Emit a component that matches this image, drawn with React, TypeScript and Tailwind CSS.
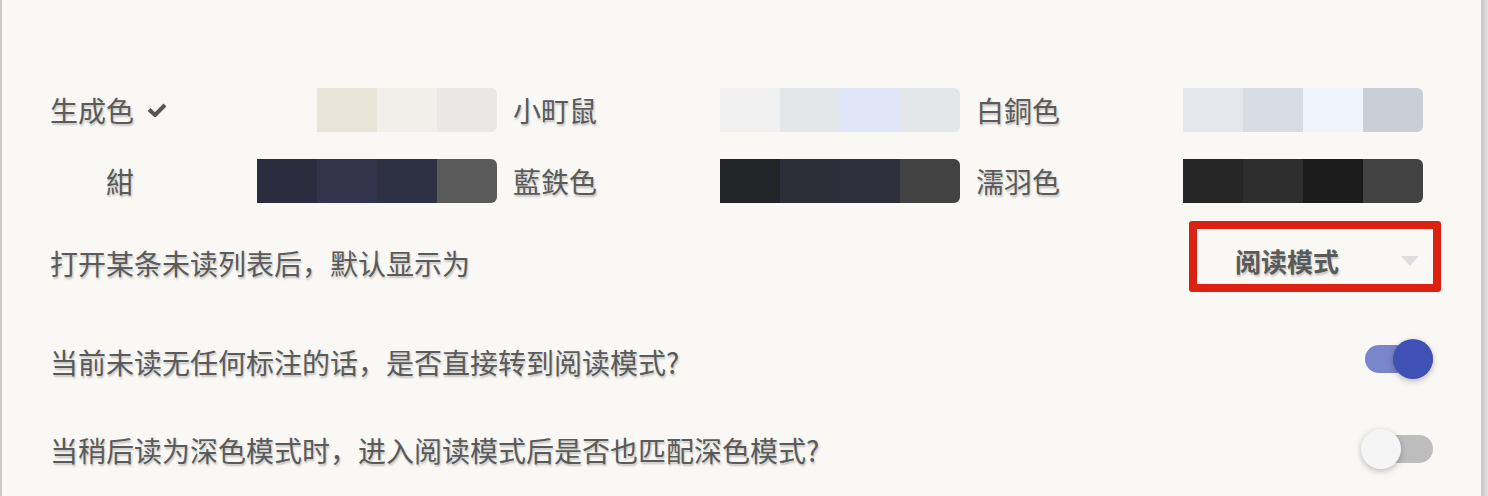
import React, { useState } from "react";

type Theme = {
  name: string;
  colors: string[];
  checked?: boolean;
};

const themes: Theme[] = [
  { name: "生成色", colors: ["#e9e4d8", "#f0efea", "#e9e8e4"], checked: true },
  { name: "小町鼠", colors: ["#f0f0f0", "#e4e7ea", "#dfe6f7", "#e4e7ea"] },
  { name: "白銅色", colors: ["#e4e7ec", "#d7dbe2", "#eff3fa", "#cacfd7"] },
  { name: "紺", colors: ["#2b2c3e", "#33344b", "#2e3144", "#5a5a5a"] },
  { name: "藍鉄色", colors: ["#232428", "#2d2f38", "#2d2f3a", "#424242"] },
  { name: "濡羽色", colors: ["#262626", "#2e2e2e", "#1b1b1b", "#424242"] },
];

const font = "font-['Noto_Sans_CJK_SC','Noto_Sans',sans-serif]";
const shadowText = "text-[#5a5a5a] [text-shadow:1px_2px_2px_rgba(0,0,0,0.22)]";

const ThemeItem = (props: Theme) => {
  return (
    <div className="flex items-center justify-between h-[44px]">
      <div className={`relative w-[84px] text-right text-[28px] leading-[44px] ${shadowText}`}>
        {props.name}
        {props.checked && (
          <svg
            className="absolute left-[97px] top-[14px]"
            width="20"
            height="16"
            viewBox="0 0 20 16"
          >
            <polyline
              points="2,7.5 8,13 18,3"
              fill="none"
              stroke="#555"
              strokeWidth="4"
              strokeLinejoin="round"
            />
          </svg>
        )}
      </div>
      <div className="flex overflow-hidden rounded-r-[6px]">
        {props.colors.map((c, i) => (
          <div key={i} className="w-[60px] h-[44px]" style={{ backgroundColor: c }} />
        ))}
      </div>
    </div>
  );
};

const Toggle = ({ on, onClick }: { on: boolean; onClick: () => void }) => {
  return (
    <button onClick={onClick} className="relative w-[72px] h-[40px] shrink-0 cursor-pointer">
      <span
        className={`absolute left-[4px] right-0 top-[6px] h-[28px] rounded-full ${
          on ? "bg-[#7986cb]" : "bg-[#bdbdbd]"
        }`}
      />
      <span
        className={`absolute top-0 w-[40px] h-[40px] rounded-full shadow-[0_2px_6px_rgba(0,0,0,0.25)] ${
          on ? "right-0 bg-[#3f51b5]" : "left-0 bg-[#f5f5f5]"
        }`}
      />
    </button>
  );
};

export default function App() {
  const [direct, setDirect] = useState(true);
  const [dark, setDark] = useState(false);

  return (
    <div className={`flex w-full h-[496px] overflow-hidden bg-[#f9f8f5] ${font}`}>
      <div className="flex-1 border-l-2 border-[#cacaca] pl-[48px] pt-[88px]">
        <div className="grid grid-cols-3 gap-x-[16px] gap-y-[27px] w-[1373px]">
          {themes.map((t) => (
            <ThemeItem key={t.name} {...t} />
          ))}
        </div>

        <div className="flex items-center justify-between h-[71px] mt-[18px] pr-[40px]">
          <span className={`text-[28px] pt-[12px] ${shadowText}`}>打开某条未读列表后，默认显示为</span>
          <div className="w-[252px] h-[71px] border-[8px] border-[#dc2011] rounded-[3px] flex items-center pt-[8px] pl-[38px] pr-[14px]">
            <span className={`flex-1 text-[26px] font-bold ${shadowText}`}>阅读模式</span>
            <svg width="18" height="10" viewBox="0 0 18 10">
              <polygon points="0,0 18,0 9,10" fill="#dedede" />
            </svg>
          </div>
        </div>

        <div className="flex items-center justify-between h-[90px] mt-[22px] pr-[48px]">
          <span className={`text-[28px] pt-[6px] ${shadowText}`}>当前未读无任何标注的话，是否直接转到阅读模式?</span>
          <Toggle on={direct} onClick={() => setDirect(!direct)} />
        </div>

        <div className="flex items-center justify-between h-[90px] pr-[48px]">
          <span className={`text-[28px] pt-[2px] ${shadowText}`}>当稍后读为深色模式时，进入阅读模式后是否也匹配深色模式?</span>
          <Toggle on={dark} onClick={() => setDark(!dark)} />
        </div>
      </div>
      <div className="w-[7px] h-full bg-gradient-to-r from-[#c6c6c6] to-[#e2e2e2]" />
    </div>
  );
}
